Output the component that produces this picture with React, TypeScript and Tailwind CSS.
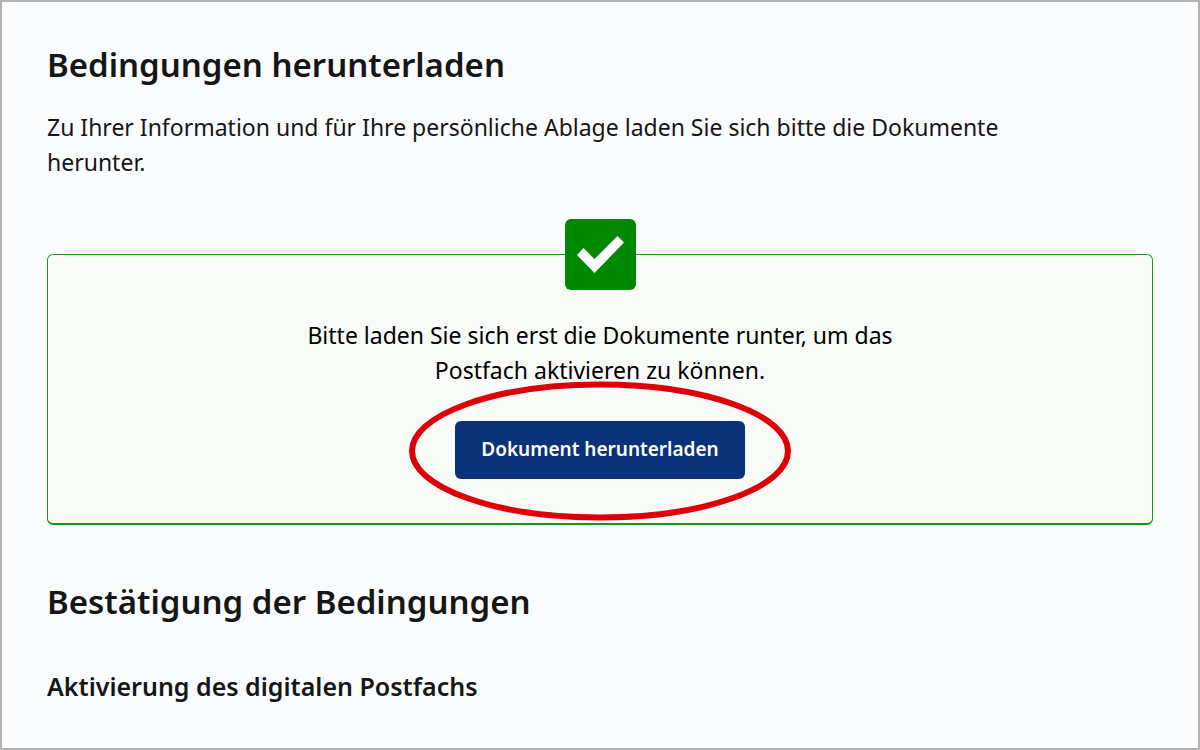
export default function App() {
  return (
    <div className="flex min-h-screen flex-col border-2 border-[#b3b3b3] bg-[#fafbfd] px-[45px] pt-[39px] font-['Noto_Sans',sans-serif] text-[#161616]">
      <main>
        <h1 className="text-[33px] leading-[48px] font-semibold">Bedingungen herunterladen</h1>
        <p className="mt-[21px] max-w-[1000px] text-[23px] leading-[35px]">
          Zu Ihrer Information und für Ihre persönliche Ablage laden Sie sich bitte die Dokumente herunter.
        </p>
        <section className="relative mt-[74px] flex flex-col items-center rounded-md border border-b-2 border-[#209020] bg-[#f7faf7] px-6 pt-[63px] pb-[44px] text-black">
          <svg className="absolute -top-9 h-[71px] w-[71px]" viewBox="0 0 71 71" role="img" aria-label="Hinweis">
            <rect width="71" height="71" rx="6" fill="#008800" />
            <path d="M12 36l6.500-7L29.500 40 52.500 17l6.500 6.500L29.500 54z" fill="#fff" />
          </svg>
          <p className="max-w-[620px] text-center text-[23px] leading-[35px]">
            Bitte laden Sie sich erst die Dokumente runter, um das Postfach aktivieren zu können.
          </p>
          <div className="relative mt-[33px] flex justify-center">
            <button type="button" className="h-[58px] rounded-md bg-[#0a3278] px-[26px] pb-[2px] text-[19px] font-semibold whitespace-nowrap text-white">
              Dokument herunterladen
            </button>
            <svg className="pointer-events-none absolute -top-10 h-[140px] w-[384px] max-w-none" viewBox="0 0 384 140" aria-hidden="true">
              <ellipse cx="192" cy="70" rx="188" ry="66.500" fill="none" stroke="#de0009" strokeWidth="6" />
            </svg>
          </div>
        </section>
        <h2 className="mt-[53px] text-[33px] leading-[48px] font-semibold">Bestätigung der Bedingungen</h2>
        <h3 className="mt-[42px] text-[25px] leading-[36px] font-semibold">Aktivierung des digitalen Postfachs</h3>
      </main>
    </div>
  );
}
